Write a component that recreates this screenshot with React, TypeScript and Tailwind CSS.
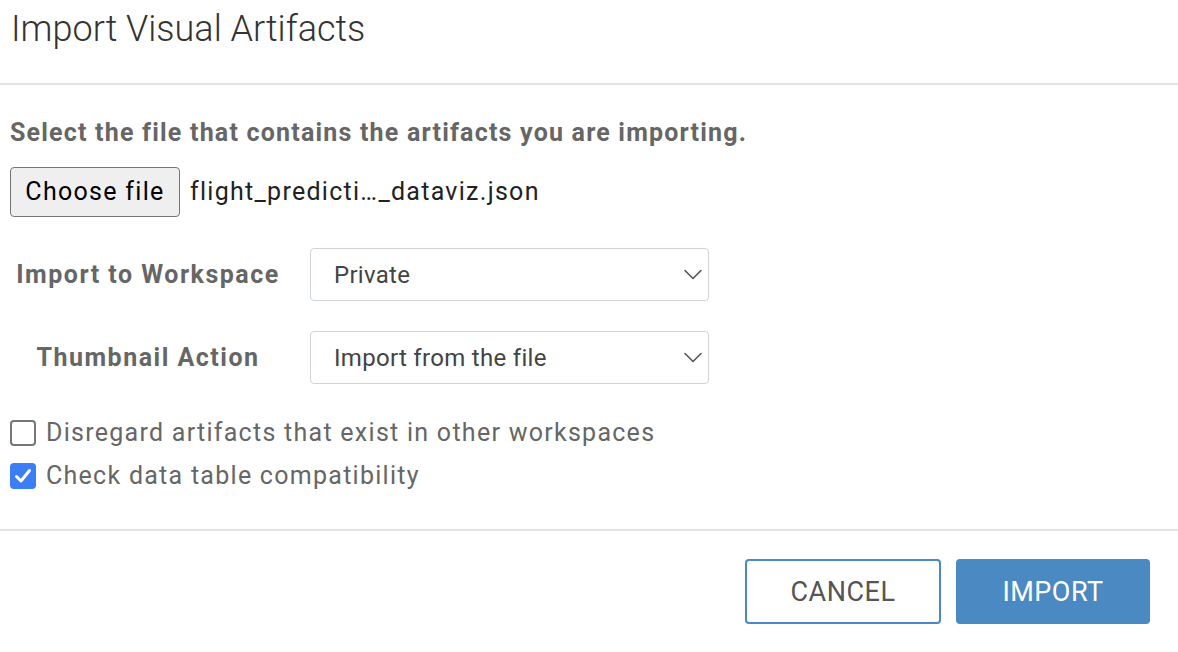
import React from "react";

function Chevron() {
  return (
    <svg width="18" height="11" viewBox="0 0 18 11" fill="none">
      <path d="M1 1.5 L9 9.5 L17 1.5" stroke="#555" strokeWidth="1.6" strokeLinecap="round" strokeLinejoin="round" />
    </svg>
  );
}

function Select({ value }: { value: string }) {
  return (
    <div className="ml-[24px] flex h-[53px] w-[399px] items-center justify-between rounded-[4px] border border-[#ced4da] bg-white pl-[23px] pr-[6px]">
      <span className="text-[24px] leading-[28px] tracking-[0.3px] text-[#444]">{value}</span>
      <Chevron />
    </div>
  );
}

function Checkbox({ checked, label }: { checked: boolean; label: string }) {
  return (
    <div className="flex h-[26px] items-center">
      {checked ? (
        <div className="flex h-[26px] w-[26px] items-center justify-center rounded-[4px] bg-[#3b7ef6]">
          <svg width="18" height="16" viewBox="0 0 18 16" fill="none">
            <path d="M2.5 8.5 L7 13 L15.5 2.5" stroke="white" strokeWidth="3" strokeLinecap="round" strokeLinejoin="round" />
          </svg>
        </div>
      ) : (
        <div className="h-[26px] w-[26px] rounded-[4px] border-[2px] border-[#767676] bg-white" />
      )}
      <span className="ml-[10px] text-[25px] leading-[28px] tracking-[1.27px] text-[#666]">{label}</span>
    </div>
  );
}

export default function App() {
  return (
    <div className="h-[652px] w-[1178px] overflow-hidden bg-white" style={{ fontFamily: "Roboto, 'Noto Sans', sans-serif" }}>
      <div className="h-[83px] pl-[11px] pt-[8px]">
        <h1 className="text-[36px] font-light leading-[42px] text-[#333]">Import Visual Artifacts</h1>
      </div>
      <div className="h-[2px] bg-[#e1e4e8]" />
      <div className="px-[10px] pt-[34px]">
        <p className="text-[25px] font-bold leading-[28px] tracking-[1.2px] text-[#666]">
          Select the file that contains the artifacts you are importing.
        </p>
        <div className="mt-[20px] flex items-center">
          <div className="flex h-[50px] w-[170px] items-center justify-center rounded-[4px] border border-[#767676] bg-[#efefef] text-[25px] leading-[28px] tracking-[1.3px] text-black">
            Choose file
          </div>
          <span className="ml-[10px] text-[25px] leading-[28px] tracking-[1.28px] text-[#222]">flight_predicti…_dataviz.json</span>
        </div>
        <div className="mt-[31px] flex items-center">
          <div className="w-[276px] text-center text-[25px] font-bold leading-[28px] tracking-[1.5px] text-[#666]">Import to Workspace</div>
          <Select value="Private" />
        </div>
        <div className="mt-[30px] flex items-center">
          <div className="w-[276px] text-center text-[25px] font-bold leading-[28px] tracking-[1.5px] text-[#666]">Thumbnail Action</div>
          <Select value="Import from the file" />
        </div>
        <div className="mt-[36px] flex flex-col gap-[17px]">
          <Checkbox checked={false} label="Disregard artifacts that exist in other workspaces" />
          <Checkbox checked={true} label="Check data table compatibility" />
        </div>
      </div>
      <div className="mt-[40px] h-[2px] bg-[#e1e4e8]" />
      <div className="flex justify-end gap-[15px] pr-[28px] pt-[28px]">
        <div className="flex h-[65px] w-[196px] items-center justify-center rounded-[4px] border-[2px] border-[#4a89c2] bg-white text-[27px] leading-[32px] tracking-[0.5px] text-[#555]">
          CANCEL
        </div>
        <div className="flex h-[65px] w-[194px] items-center justify-center rounded-[4px] bg-[#4a89c2] text-[27px] leading-[32px] tracking-[0.5px] text-white">
          IMPORT
        </div>
      </div>
    </div>
  );
}
